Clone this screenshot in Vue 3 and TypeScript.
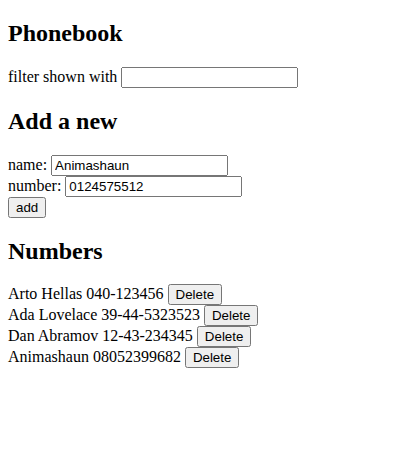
<script setup lang="ts">
import { computed, ref } from 'vue'

interface Person {
  id: number
  name: string
  number: string
}

const persons = ref<Person[]>([
  { id: 1, name: 'Arto Hellas', number: '040-123456' },
  { id: 2, name: 'Ada Lovelace', number: '39-44-5323523' },
  { id: 3, name: 'Dan Abramov', number: '12-43-234345' },
  { id: 4, name: 'Animashaun', number: '08052399682' },
])
const filter = ref('')
const newName = ref('Animashaun')
const newNumber = ref('0124575512')

const shown = computed(() =>
  persons.value.filter((p) => p.name.toLowerCase().includes(filter.value.toLowerCase())),
)

function addPerson(): void {
  const id = Math.max(0, ...persons.value.map((p) => p.id)) + 1
  persons.value.push({ id, name: newName.value, number: newNumber.value })
  newName.value = ''
  newNumber.value = ''
}

function removePerson(id: number): void {
  persons.value = persons.value.filter((p) => p.id !== id)
}
</script>

<template>
  <main class="phonebook">
    <h2>Phonebook</h2>
    <div class="row">
      <label for="filter">filter shown with</label>
      <input id="filter" v-model="filter" type="text" />
    </div>
    <h2>Add a new</h2>
    <form @submit.prevent="addPerson">
      <div class="row">
        <label for="name">name:</label>
        <input id="name" v-model="newName" type="text" />
      </div>
      <div class="row">
        <label for="number">number:</label>
        <input id="number" v-model="newNumber" type="text" />
      </div>
      <div class="row">
        <button type="submit">add</button>
      </div>
    </form>
    <h2>Numbers</h2>
    <div v-for="person in shown" :key="person.id" class="row">
      <span>{{ person.name }} {{ person.number }}</span>
      <button type="button" @click="removePerson(person.id)">Delete</button>
    </div>
  </main>
</template>

<style>
body {
  margin: 0;
  background: #fff;
}
</style>

<style scoped>
.phonebook {
  padding: 0 8px;
  color: #000;
  font: 16px/18px "Liberation Serif", "Times New Roman", serif;
}

h2 {
  font-size: 24px;
  line-height: 27px;
}

.row {
  display: flex;
  align-items: baseline;
  gap: 4px;
  height: 21px;
}

input,
button {
  box-sizing: border-box;
  height: 21px;
  margin: 0;
  color: #000;
  font-family: "Liberation Sans", Arial, sans-serif;
  line-height: 15px;
}

input {
  width: 177px;
}
</style>
